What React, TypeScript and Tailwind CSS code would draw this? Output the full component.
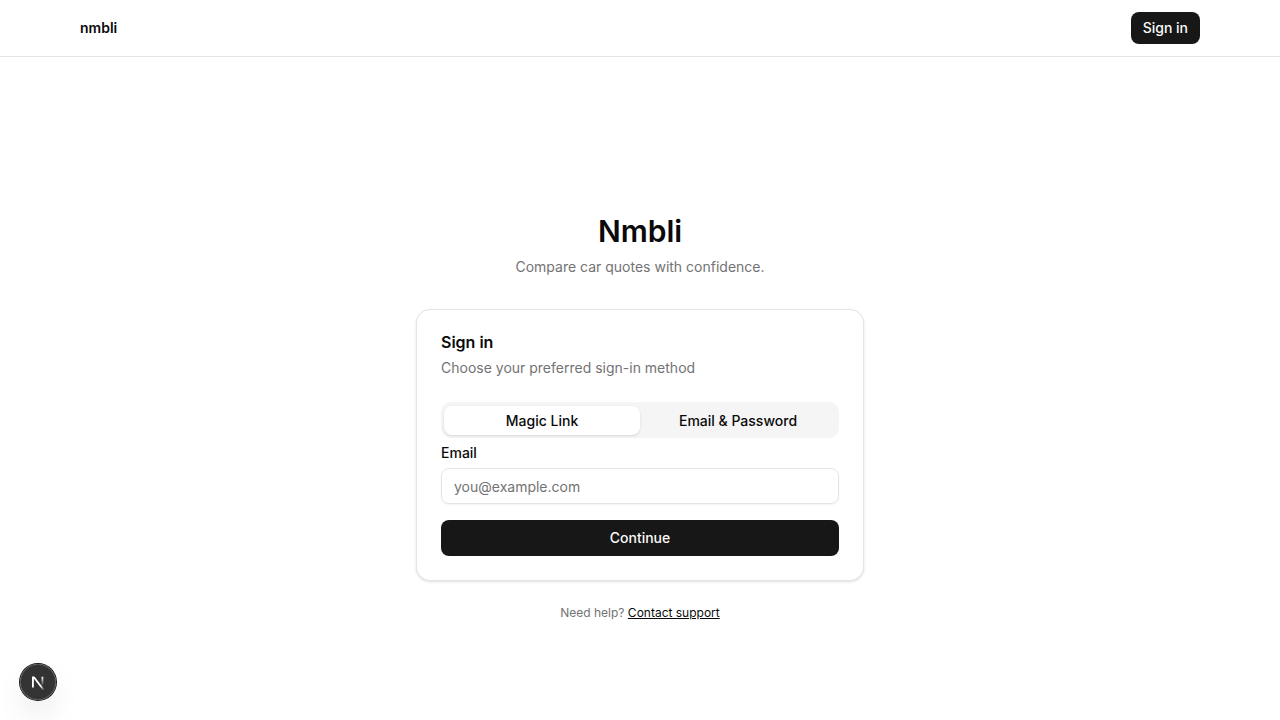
import { useState } from "react";

const methods = ["Magic Link", "Email & Password"];

function Header() {
  return (
    <header className="border-b border-neutral-200">
      <div className="mx-auto flex h-14 max-w-6xl items-center justify-between px-4">
        <a href="#" className="text-sm font-semibold">
          nmbli
        </a>
        <button type="button" className="h-8 rounded-lg bg-neutral-900 px-3 text-sm font-medium text-neutral-50">
          Sign in
        </button>
      </div>
    </header>
  );
}

function SignInCard() {
  const [method, setMethod] = useState(methods[0]);
  return (
    <section className="mt-8 flex flex-col gap-6 rounded-[14px] border border-neutral-200 bg-white p-6 shadow-sm">
      <div className="flex flex-col gap-2">
        <h2 className="text-base leading-none font-semibold">Sign in</h2>
        <p className="text-sm text-neutral-500">Choose your preferred sign-in method</p>
      </div>
      <div className="flex flex-col gap-2">
        <div role="tablist" className="flex h-9 items-end rounded-[10px] bg-neutral-100 p-[3px]">
          {methods.map((name) => (
            <button
              key={name}
              type="button"
              role="tab"
              aria-selected={method === name}
              onClick={() => setMethod(name)}
              className="h-[29px] flex-1 rounded-lg text-sm font-medium aria-selected:bg-white aria-selected:shadow-sm"
            >
              {name}
            </button>
          ))}
        </div>
        <form className="flex flex-col gap-4" onSubmit={(e) => e.preventDefault()}>
          <div className="flex flex-col gap-2">
            <label htmlFor="email" className="text-sm leading-none font-medium">
              Email
            </label>
            <input
              id="email"
              type="email"
              placeholder="you@example.com"
              className="h-9 w-full rounded-lg border border-neutral-200 px-3 text-sm shadow-xs placeholder:text-neutral-500"
            />
          </div>
          <button type="submit" className="h-9 rounded-lg bg-neutral-900 text-sm font-medium text-neutral-50">
            Continue
          </button>
        </form>
      </div>
    </section>
  );
}

function DevBadge() {
  return (
    <button
      type="button"
      aria-label="Open developer tools"
      className="fixed bottom-5 left-5 flex size-9 items-center justify-center rounded-full bg-black/80 shadow-[0_0_0_1px_#171717,inset_0_0_0_1px_rgba(255,255,255,0.14),0_16px_32px_-8px_rgba(0,0,0,0.24)]"
    >
      <svg viewBox="0 0 40 40" fill="none" className="size-10 shrink-0">
        <defs>
          <linearGradient id="diagonal" x1="9.96" y1="11.12" x2="15.48" y2="17.97" gradientUnits="userSpaceOnUse">
            <stop stopColor="white" />
            <stop offset="0.6" stopColor="white" stopOpacity="0" />
            <stop offset="1" stopColor="white" stopOpacity="0" />
          </linearGradient>
          <linearGradient id="stem" x1="11.82" y1="1.4" x2="11.79" y2="11" gradientUnits="userSpaceOnUse">
            <stop stopColor="white" />
            <stop offset="1" stopColor="white" stopOpacity="0" />
          </linearGradient>
          <clipPath id="letter">
            <rect x="0" y="1.5" width="16" height="14" />
          </clipPath>
        </defs>
        <g transform="translate(12.6 13)" strokeWidth="1.86" clipPath="url(#letter)">
          <path d="M13.3 15.2L2.34 1V12.6" stroke="url(#diagonal)" />
          <path d="M11.825 1.5V13.1" stroke="url(#stem)" />
        </g>
      </svg>
    </button>
  );
}

export default function App() {
  return (
    <div className="bg-white font-['Inter',sans-serif] text-neutral-950 antialiased">
      <Header />
      <main className="flex min-h-[calc(100vh-57px)] items-center justify-center px-4 pt-[57px]">
        <div className="w-full max-w-md">
          <div className="text-center">
            <h1 className="text-3xl font-semibold">Nmbli</h1>
            <p className="mt-2 text-sm text-neutral-500">Compare car quotes with confidence.</p>
          </div>
          <SignInCard />
          <p className="mt-6 text-center text-xs text-neutral-500">
            Need help?{" "}
            <a href="#" className="text-neutral-950 underline">
              Contact support
            </a>
          </p>
        </div>
      </main>
      <DevBadge />
    </div>
  );
}
